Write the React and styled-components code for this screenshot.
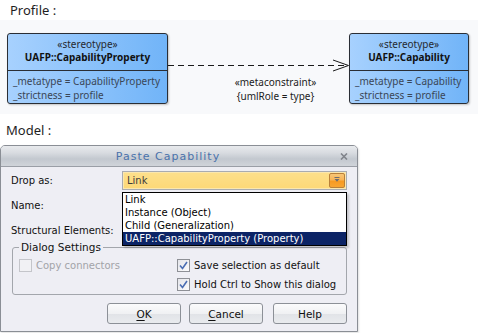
import React from 'react';
import styled, { createGlobalStyle } from 'styled-components';

const Global = createGlobalStyle`
  html, body { margin: 0; padding: 0; background: #ffffff; }
  body { width: 478px; height: 333px; overflow: hidden; font-family: "Noto Sans", sans-serif; }
`;

const Page = styled.div`
  display: flex;
  flex-direction: column;
  width: 478px;
  height: 333px;
`;

const SectionLabel = styled.div`
  font-family: "Noto Sans", sans-serif;
  font-size: 13px;
  color: #1e1e1e;
  line-height: 20px;
  height: ${p => p.$h}px;
  padding-top: ${p => p.$top}px;
  padding-left: ${p => p.$indent}px;
  box-sizing: border-box;
`;

/* ---------- diagram ---------- */
const Canvas = styled.div`
  height: 94px;
  background: #f8f9fb;
  padding: 13px 9px 0 7px;
  box-sizing: border-box;
  display: flex;
  align-items: flex-start;
  font-family: "Noto Sans", sans-serif;
  font-size: 10px;
`;

const ClassBox = styled.div`
  width: ${p => p.$w}px;
  height: 71px;
  flex: none;
  box-sizing: border-box;
  border: 1px solid #2a2e35;
  border-radius: 3px;
  background: linear-gradient(to right, #a7d1fe, #71b4f8);
  box-shadow: 1px 1px 2px rgba(0, 0, 0, 0.22);
  display: flex;
  flex-direction: column;
`;

const ClassHeader = styled.div`
  height: 37px;
  box-sizing: border-box;
  border-bottom: 1px solid #2a2e35;
  padding-top: 4px;
  display: flex;
  flex-direction: column;
  align-items: center;
  line-height: 13px;
`;

const Stereotype = styled.div`
  color: #262a30;
`;

const ClassName = styled.div`
  font-weight: 700;
  color: #111;
`;

const Attributes = styled.div`
  padding: 3px 0 0 5px;
  line-height: 14px;
  color: #3a4656;
  white-space: nowrap;
`;

const Connector = styled.div`
  flex: 1;
  display: flex;
  flex-direction: column;
`;

const ConnectorLabels = styled.div`
  padding-left: 34px;
  text-align: center;
  line-height: 14px;
  color: #1c1c1c;
  white-space: nowrap;
`;

/* ---------- dialog ---------- */
const Dialog = styled.div`
  width: 358px;
  height: 187px;
  box-sizing: border-box;
  border: 1px solid #8a8e95;
  border-radius: 5px 5px 0 0;
  background: #eeeef4;
  display: flex;
  flex-direction: column;
  font-family: "DejaVu Sans", sans-serif;
  font-size: 10px;
  color: #111;
  box-shadow: 1px 1px 2px rgba(0, 0, 0, 0.12);
`;

const TitleBar = styled.div`
  height: 21px;
  flex: none;
  box-sizing: border-box;
  border-bottom: 1px solid #9a9ea6;
  border-radius: 4px 4px 0 0;
  background: linear-gradient(#e8eaed 0%, #d8dbe0 35%, #c3c8cf 65%, #d0d4da 100%);
  display: flex;
  align-items: center;
`;

const Title = styled.div`
  flex: 1;
  text-align: center;
  font-size: 11px;
  letter-spacing: 1px;
  color: #4a72ab;
  padding-left: 1px;
`;

const CloseBtn = styled.div`
  width: 23px;
  display: flex;
  align-items: center;
  justify-content: flex-start;
  padding-left: 6px;
  box-sizing: border-box;
`;

const Body = styled.div`
  flex: 1;
  padding: 1px 10px 0 10px;
  display: flex;
  flex-direction: column;
`;

const FormRow = styled.div`
  height: 25px;
  display: grid;
  grid-template-columns: 111px 225px;
  align-items: center;
`;

const Label = styled.div`
  white-space: nowrap;
`;

const ComboWrap = styled.div`
  position: relative;
  height: 19px;
`;

const Combo = styled.div`
  height: 19px;
  box-sizing: border-box;
  border: 1px solid #a9abb0;
  background: linear-gradient(#fde08c, #fdd877);
  box-shadow: inset 0 0 0 1px #fbe7ae;
  display: flex;
  align-items: center;
  justify-content: space-between;
  padding: 0 1px 0 4px;
  color: #3c3c3c;
`;

const ComboButton = styled.div`
  width: 16px;
  height: 15px;
  box-sizing: border-box;
  border: 1px solid #b9803a;
  border-radius: 2px;
  background: linear-gradient(#f9c777 0%, #f8b458 45%, #f79a22 55%, #f9a531 100%);
  display: flex;
  align-items: center;
  justify-content: center;
  padding-bottom: 2px;
`;

const DropList = styled.ul`
  position: absolute;
  left: 0;
  top: 21px;
  width: 225px;
  margin: 0;
  padding: 0;
  list-style: none;
  box-sizing: border-box;
  border: 1px solid #000;
  background: #fff;
  box-shadow: 2px 2px 2px rgba(0, 0, 0, 0.18);
  z-index: 2;
`;

const DropItem = styled.li`
  height: 13px;
  line-height: 13px;
  padding-left: 2px;
  white-space: nowrap;
  color: ${p => (p.$selected ? '#ffffff' : '#000000')};
  background: ${p => (p.$selected ? '#0c2466' : 'transparent')};
`;

const GroupBox = styled.div`
  margin: 4px 0 0 1px;
  height: 48px;
  box-sizing: border-box;
  border: 1px solid #a3a6ac;
  border-radius: 3px;
  display: flex;
  flex-direction: column;
`;

const Legend = styled.div`
  align-self: flex-start;
  margin: -7px 0 0 6px;
  padding: 0 2px;
  line-height: 13px;
  background: #eeeef4;
  font-size: 10.5px;
`;

const GroupGrid = styled.div`
  margin-top: 1px;
  display: grid;
  grid-template-columns: 158px 1fr;
  grid-template-rows: 20px 19px;
  padding-left: 6px;
`;

const CheckRow = styled.label`
  display: flex;
  align-items: center;
  gap: 4px;
  white-space: nowrap;
  color: ${p => (p.$disabled ? '#a2a3a8' : '#111')};
  grid-column: ${p => p.$col};
  grid-row: ${p => p.$row};
`;

const Box = styled.span`
  width: 13px;
  height: 13px;
  box-sizing: border-box;
  flex: none;
  border: 1px solid ${p => (p.$disabled ? '#c4c5ca' : '#8e9096')};
  background: ${p => (p.$disabled ? '#f1f1f4' : 'linear-gradient(135deg, #e4e5ea, #fbfbfc)')};
  display: flex;
  align-items: center;
  justify-content: center;
`;

const ButtonRow = styled.div`
  margin-top: 8px;
  display: flex;
  justify-content: flex-end;
  gap: 8px;
`;

const Button = styled.div`
  width: 74px;
  height: 21px;
  box-sizing: border-box;
  border: 1px solid #8c9097;
  border-radius: 3px;
  background: linear-gradient(#fbfbfc 0%, #f0f1f3 50%, #e1e3e7 52%, #e9ebee 100%);
  display: flex;
  align-items: center;
  justify-content: center;
  font-size: 10.5px;
  margin-left: ${p => p.$ml || 0}px;
  u { text-decoration: underline; text-underline-offset: 2px; }
`;

const Check = () => (
  <svg width="9" height="9" viewBox="0 0 9 9">
    <path d="M1 4.5 L3.5 7.5 L8 1" fill="none" stroke="#4a6db3" strokeWidth="1.6" />
  </svg>
);

export default function App() {
  return (
    <Page>
      <Global />
      <SectionLabel $h={20} $top={0} $indent={10}>Profile :</SectionLabel>
      <Canvas>
        <ClassBox $w={161}>
          <ClassHeader>
            <Stereotype>«stereotype»</Stereotype>
            <ClassName>UAFP::CapabilityProperty</ClassName>
          </ClassHeader>
          <Attributes>
            <div>_metatype = CapabilityProperty</div>
            <div>_strictness = profile</div>
          </Attributes>
        </ClassBox>
        <Connector>
          <svg width="181" height="42" viewBox="0 0 181 42">
            <line x1="0" y1="32.5" x2="180" y2="32.5" stroke="#1a1a1a" strokeWidth="1" strokeDasharray="6 4" />
            <polyline points="165,27 180.5,32.5 165,38" fill="none" stroke="#1a1a1a" strokeWidth="1" />
          </svg>
          <ConnectorLabels>
            <div>«metaconstraint»</div>
            <div>{'{umlRole = type}'}</div>
          </ConnectorLabels>
        </Connector>
        <ClassBox $w={120}>
          <ClassHeader>
            <Stereotype>«stereotype»</Stereotype>
            <ClassName>UAFP::Capability</ClassName>
          </ClassHeader>
          <Attributes>
            <div>_metatype = Capability</div>
            <div>_strictness = profile</div>
          </Attributes>
        </ClassBox>
      </Canvas>
      <SectionLabel $h={31} $top={6} $indent={6}>Model :</SectionLabel>
      <Dialog>
        <TitleBar>
          <Title>Paste Capability</Title>
          <CloseBtn>
            <svg width="8" height="7" viewBox="0 0 8 7">
              <path d="M1 0.5 L7 6.5 M7 0.5 L1 6.5" stroke="#80848b" strokeWidth="1.6" />
            </svg>
          </CloseBtn>
        </TitleBar>
        <Body>
          <FormRow>
            <Label>Drop as:</Label>
            <ComboWrap>
              <Combo>
                <span>Link</span>
                <ComboButton>
                  <svg width="6" height="5" viewBox="0 0 6 5">
                    <path d="M0.5 0.5 H5.5" stroke="#6d6d70" strokeWidth="1" />
                    <path d="M0.5 2 H5.5 L3 4.8 Z" fill="#6d6d70" />
                  </svg>
                </ComboButton>
              </Combo>
              <DropList>
                <DropItem>Link</DropItem>
                <DropItem>Instance (Object)</DropItem>
                <DropItem>Child (Generalization)</DropItem>
                <DropItem $selected>UAFP::CapabilityProperty (Property)</DropItem>
              </DropList>
            </ComboWrap>
          </FormRow>
          <FormRow>
            <Label>Name:</Label>
          </FormRow>
          <FormRow>
            <Label>Structural Elements:</Label>
          </FormRow>
          <GroupBox>
            <Legend>Dialog Settings</Legend>
            <GroupGrid>
              <CheckRow $disabled $col={1} $row={1}>
                <Box $disabled />
                Copy connectors
              </CheckRow>
              <CheckRow $col={2} $row={1}>
                <Box><Check /></Box>
                Save selection as default
              </CheckRow>
              <CheckRow $col={2} $row={2}>
                <Box><Check /></Box>
                Hold Ctrl to Show this dialog
              </CheckRow>
            </GroupGrid>
          </GroupBox>
          <ButtonRow>
            <Button><span><u>O</u>K</span></Button>
            <Button><span><u>C</u>ancel</span></Button>
            <Button $ml={2}>Help</Button>
          </ButtonRow>
        </Body>
      </Dialog>
    </Page>
  );
}
